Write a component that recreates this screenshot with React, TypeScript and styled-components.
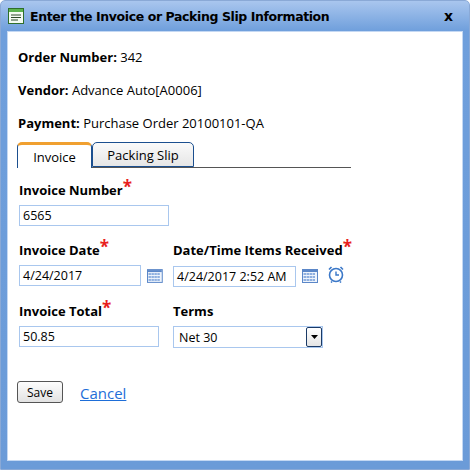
import React from "react";
import styled, { createGlobalStyle } from "styled-components";

const Global = createGlobalStyle`
  html, body { margin: 0; padding: 0; background: #fff; }
  body { font-family: "Open Sans", "Noto Sans", sans-serif; font-size: 13px; color: #000; }
`;

const Frame = styled.div`
  width: 470px; height: 470px; box-sizing: border-box;
  background: linear-gradient(#a9c6ee, #6f9fdc 30px, #6b9bd8);
  border: 1px solid #8aa9d6; border-radius: 5px 5px 0 0;
  padding: 0 6px 8px 6px; display: flex; flex-direction: column;
`;
const TitleBar = styled.div`
  height: 30px; display: flex; align-items: center; gap: 6px; padding-left: 1px;
  font-family: Tahoma, "DejaVu Sans", sans-serif; font-weight: bold; font-size: 12.5px;
`;
const Title = styled.span`flex: 1; letter-spacing: -0.4px;`;
const Close = styled.span`font-size: 14px; margin-right: 10px; font-family: "DejaVu Sans", sans-serif; font-weight: bold;`;
const Body = styled.div`
  flex: 1; background: #fff; border: 1px solid #c4d8f3; padding: 14px 9px 0 9px;
`;
const Info = styled.div`margin: 3px 0 16px 1px; line-height: 17px; b{font-weight:700;}`;
const Tabs = styled.div`
  display: flex; width: 334px; border-bottom: 1px solid #555; margin-top: -6px; height: 25px;
`;
const Tab = styled.div<{ active?: boolean }>`
  box-sizing: border-box; height: 25px; display: flex; align-items: center; justify-content: center;
  white-space: nowrap; border: 1px solid #1b4f8f; border-radius: 5px 5px 0 0;
  ${p => p.active
    ? "border-top: 3px solid #f0a030; border-bottom: none; background:#fff; width:75px; padding-top:1px; height:26px;"
    : "background: linear-gradient(#fafafa,#e6e6e6); width:102px;"}
`;
const Form = styled.div`padding: 14px 0 0 2px; display: flex; flex-direction: column; gap: 16px;`;
const Row = styled.div`display: flex; gap: 10px;`;
const Field = styled.div<{ w: number }>`width: ${p => p.w}px; display: flex; flex-direction: column; gap: 6px;`;
const Label = styled.div`font-weight: 700; line-height: 17px; height: 17px; white-space: nowrap;`;
const Star = styled.span`color: #e8211d; font-size: 17px; line-height: 0; position: relative; top: -2px;`;
const Ctl = styled.div`display: flex; align-items: center; gap: 6px;`;
const Input = styled.div<{ w: number }>`
  width: ${p => p.w}px; height: 21px; box-sizing: border-box; border: 1px solid #a9c7ee;
  padding: 0 3px; display: flex; align-items: center; font-size: 12.5px;
`;
const Select = styled.div`
  width: 150px; height: 22px; box-sizing: border-box; border: 1px solid #a9c7ee;
  display: flex; align-items: center; justify-content: space-between; padding-left: 5px; font-size: 12.5px;
`;
const Arrow = styled.div`
  width: 16px; height: 20px; box-sizing: border-box; border: 1px solid #1b3a66; border-radius: 2px;
  background: linear-gradient(#fff,#e4e4e4); display: flex; align-items: center; justify-content: center;
`;
const Actions = styled.div`display: flex; align-items: center; gap: 17px; margin-top: 33px;`;
const Button = styled.button`
  width: 46px; height: 22px; font-family: inherit; font-size: 12px; border: 1px solid #555;
  border-radius: 3px; background: linear-gradient(#fdfdfd, #e2e2e2); padding: 0;
`;
const Link = styled.a`color: #1e6ed8; text-decoration: underline; font-size: 15px; margin-top: 2px;`;

const Cal = () => (
  <svg width="16" height="14" viewBox="0 0 16 14">
    <rect x="0.5" y="0.5" width="15" height="13" fill="#eef4fc" stroke="#5b87c8" />
    <rect x="1" y="1" width="14" height="2" fill="#5b87c8" />
    {[4, 7, 10].map(y => [3, 6, 9, 12].map(x => <rect key={x + "" + y} x={x - 1.5} y={y} width="2.5" height="2" fill="#8fb0e0" />))}
  </svg>
);
const Clock = () => (
  <svg width="18" height="18" viewBox="0 0 18 18">
    <circle cx="9" cy="10" r="6.5" fill="#fff" stroke="#3b78c8" strokeWidth="1.6" />
    <path d="M9 6.5V10h3" stroke="#3b78c8" strokeWidth="1.4" fill="none" />
    <path d="M2 4.5L4.5 2M16 4.5L13.5 2M5 16.5L4 17.5M13 16.5L14 17.5" stroke="#3b78c8" strokeWidth="1.6" />
  </svg>
);
const AppIcon = () => (
  <svg width="16" height="16" viewBox="0 0 16 16">
    <rect x="0.5" y="0.5" width="15" height="15" fill="#f4fbf2" stroke="#2f6e2a" />
    <rect x="1" y="1" width="14" height="3" fill="#5cb34e" />
    <path d="M3 7h10M3 9.5h10M3 12h7" stroke="#2f4a2a" strokeWidth="1" />
  </svg>
);

export default function App() {
  return (
    <>
      <Global />
      <Frame>
        <TitleBar><AppIcon /><Title>Enter the Invoice or Packing Slip Information</Title><Close>x</Close></TitleBar>
        <Body>
          <Info><b>Order Number:</b> 342</Info>
          <Info><b>Vendor:</b> Advance Auto[A0006]</Info>
          <Info><b>Payment:</b> Purchase Order 20100101-QA</Info>
          <Tabs><Tab active>Invoice</Tab><Tab>Packing Slip</Tab></Tabs>
          <Form>
            <Row>
              <Field w={150}><Label>Invoice Number<Star>*</Star></Label><Input w={150}>6565</Input></Field>
            </Row>
            <Row>
              <Field w={144}><Label>Invoice Date<Star>*</Star></Label><Ctl><Input w={124}>4/24/2017</Input><Cal /></Ctl></Field>
              <Field w={200}><Label>Date/Time Items Received<Star>*</Star></Label><Ctl><Input w={123}>4/24/2017 2:52 AM</Input><Cal /><span style={{ marginLeft: 3 }}><Clock /></span></Ctl></Field>
            </Row>
            <Row>
              <Field w={144}><Label>Invoice Total<Star>*</Star></Label><Input w={140}>50.85</Input></Field>
              <Field w={160}><Label>Terms</Label><Select>Net 30<Arrow><svg width="7" height="4"><path d="M0 0h7L3.5 4z" fill="#000" /></svg></Arrow></Select></Field>
            </Row>
          </Form>
          <Actions><Button>Save</Button><Link>Cancel</Link></Actions>
        </Body>
      </Frame>
    </>
  );
}
